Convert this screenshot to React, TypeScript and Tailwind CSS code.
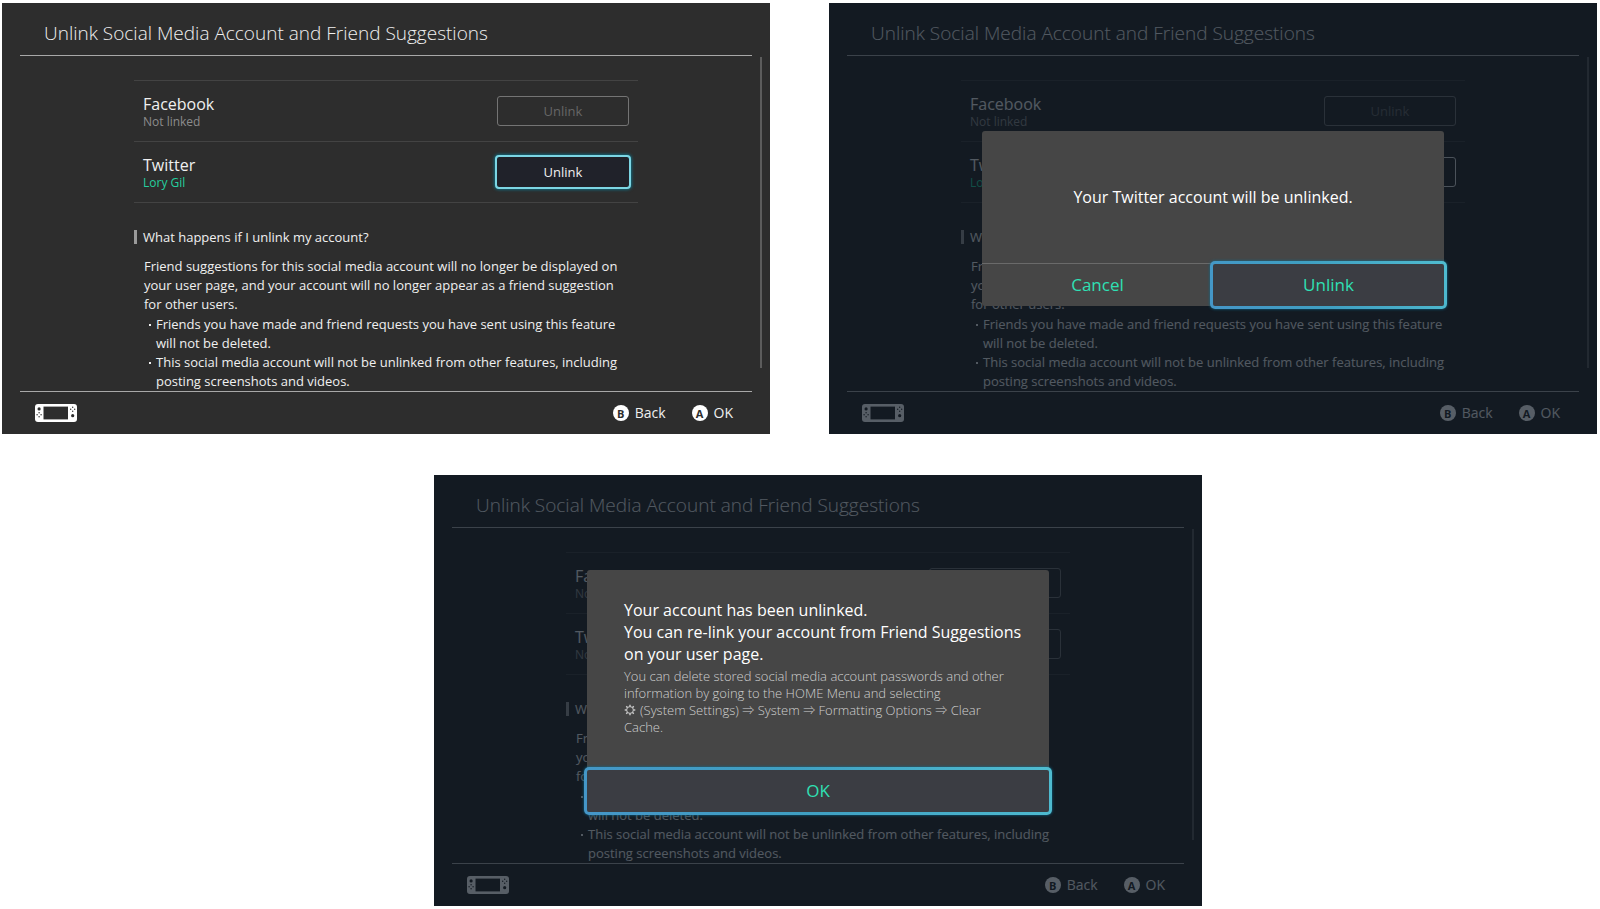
import type { ReactNode } from "react";

type Account = { name: string; status: string; linked: boolean; focused?: boolean };

function ConsoleIcon() {
  return (
    <svg viewBox="0 0 42 18" className="h-[18px] w-[42px]" aria-hidden="true">
      <rect width="42" height="18" rx="3" fill="#fff" />
      <rect x="8.5" y="2.6" width="24.5" height="12.8" fill="#2d2d2d" />
      <circle cx="4.1" cy="4.9" r="1.6" fill="#2d2d2d" />
      <circle cx="37.7" cy="11.7" r="1.6" fill="#2d2d2d" />
      <g fill="#2d2d2d">
        <circle cx="4.1" cy="8.7" r="0.7" />
        <circle cx="4.1" cy="12.7" r="0.7" />
        <circle cx="2.1" cy="10.7" r="0.7" />
        <circle cx="6.1" cy="10.7" r="0.7" />
        <circle cx="37.7" cy="3.3" r="0.7" />
        <circle cx="37.7" cy="7.3" r="0.7" />
        <circle cx="35.7" cy="5.3" r="0.7" />
        <circle cx="39.7" cy="5.3" r="0.7" />
      </g>
    </svg>
  );
}

function GearIcon() {
  const teeth = [0, 45, 90, 135, 180, 225, 270, 315];
  return (
    <svg viewBox="0 0 12 12" className="mr-1 inline-block size-3 align-[-1px]" fill="none" stroke="currentColor" aria-hidden="true">
      <circle cx="6" cy="6" r="3.4" strokeWidth="1" />
      {teeth.map((a) => (
        <path key={a} d="M6 2.4V0.7" strokeWidth="1.4" transform={`rotate(${a} 6 6)`} />
      ))}
    </svg>
  );
}

function Arrow() {
  return <span className="font-['Noto_Sans_CJK_JP',sans-serif] text-[12px] leading-none font-light">⇒</span>;
}

function Hint({ letter, label }: { letter: string; label: string }) {
  return (
    <button type="button" className="flex items-center gap-[6px] text-[14px] leading-5">
      <span className="flex size-4 items-center justify-center rounded-full bg-white text-[11px] leading-none font-bold text-[#2d2d2d]">
        {letter}
      </span>
      {label}
    </button>
  );
}

function AccountRow({ account }: { account: Account }) {
  const { name, status, linked, focused } = account;
  return (
    <li className="flex h-[61px] items-center justify-between border-b border-[#434343] px-[9px]">
      <div className="pt-[3px]">
        <h2 className="text-[16px] leading-[18px]">{name}</h2>
        <p className={linked ? "text-[12px] leading-[17px] text-[#25cf9f]" : "text-[12px] leading-[17px] text-[#8c8c8c]"}>
          {status}
        </p>
      </div>
      {focused ? (
        <button
          type="button"
          aria-label={`Unlink ${name}`}
          className="h-[30px] w-[132px] rounded-[2px] bg-[#20222a] pt-px text-[13px] text-[#f0f0f0] shadow-[0_0_3px_3px_#12687a] outline-2 outline-[#7cd6e4]"
        >
          Unlink
        </button>
      ) : (
        <button
          type="button"
          aria-label={`Unlink ${name}`}
          disabled={!linked}
          className={
            linked
              ? "h-[30px] w-[132px] rounded-[3px] border border-[#d8d8d8] pt-px text-[13px]"
              : "h-[30px] w-[132px] rounded-[3px] border border-[#747474] pt-px text-[13px] text-[#666666]"
          }
        >
          Unlink
        </button>
      )}
    </li>
  );
}

function Screen({ accounts, children }: { accounts: Account[]; children?: ReactNode }) {
  return (
    <section className="relative w-full max-w-[768px] bg-[#2d2d2d] text-[#f0f0f0]">
      <header className="mx-[18px] flex h-[53px] items-center border-b border-[#a8a8a8] px-6 pt-2">
        <h1 className="text-[19px] leading-6 font-light">Unlink Social Media Account and Friend Suggestions</h1>
      </header>

      <div className="relative px-[132px] pt-6">
        <ul className="border-t border-[#434343]">
          {accounts.map((a) => (
            <AccountRow key={a.name} account={a} />
          ))}
        </ul>
        <div className="mt-6 flex items-center gap-[6px]">
          <span className="h-[14px] w-[3px] bg-[#9a9a9a]" />
          <h2 className="text-[13px] leading-5">What happens if I unlink my account?</h2>
        </div>
        <div className="mt-[10px] w-[488px] pl-[10px] text-[13px] leading-[19px]">
          <p>
            Friend suggestions for this social media account will no longer be displayed on your user page, and your
            account will no longer appear as a friend suggestion for other users.
          </p>
          <ul className="pt-px">
            {[
              "Friends you have made and friend requests you have sent using this feature will not be deleted.",
              "This social media account will not be unlinked from other features, including posting screenshots and videos.",
            ].map((t) => (
              <li key={t} className="flex">
                <span className="flex w-3 shrink-0 justify-center pt-[9px]" aria-hidden="true">
                  <span className="size-[2px] bg-current" />
                </span>
                <span>{t}</span>
              </li>
            ))}
          </ul>
        </div>
        <span className="absolute top-[1px] right-2 h-[311px] w-[2px] bg-[#5c5c5c]" />
      </div>

      <div className="mx-[18px] border-t border-[#a8a8a8]" />
      <footer className="flex h-[42px] items-center justify-between pr-[37px] pl-[33px]">
        <ConsoleIcon />
        <div className="flex gap-[26px]">
          <Hint letter="B" label="Back" />
          <Hint letter="A" label="OK" />
        </div>
      </footer>

      {children && (
        <div className="absolute inset-0 flex items-center justify-center bg-[rgba(8,17,30,0.68)]">{children}</div>
      )}
    </section>
  );
}

function FocusedAction({ label }: { label: string }) {
  return (
    <button
      type="button"
      className="-m-[3px] h-[48px] flex-1 rounded-[5px] border-[3px] border-transparent text-[17px] text-[#2fe0b4] shadow-[0_0_3px_#0b6f94] [background:linear-gradient(#3b3d43,#3b3d43)_padding-box,linear-gradient(60deg,#4596c8,#3f9fc2_45%,#4fbcd0)_border-box]"
    >
      {label}
    </button>
  );
}

const linkedTwitter: Account = { name: "Twitter", status: "Lory Gil", linked: true };
const facebook: Account = { name: "Facebook", status: "Not linked", linked: false };

export default function App() {
  return (
    <main className="flex min-h-screen flex-col gap-[41px] bg-white py-[3px] pr-[3px] pl-[2px] font-['Open_Sans','Noto_Sans',sans-serif]">
      <div className="grid grid-cols-2 gap-[59px]">
        <Screen accounts={[facebook, { ...linkedTwitter, focused: true }]} />

        <Screen accounts={[facebook, linkedTwitter]}>
          <div role="dialog" aria-label="Unlink account" className="w-[462px] rounded-[3px] bg-[#464646]">
            <p className="flex h-[132px] items-center justify-center text-[16px] text-white">
              Your Twitter account will be unlinked.
            </p>
            <div className="flex border-t border-[#6a6a6a]">
              <button type="button" className="h-[42px] flex-1 text-[17px] text-[#2fe0b4]">
                Cancel
              </button>
              <FocusedAction label="Unlink" />
            </div>
          </div>
        </Screen>
      </div>

      <div className="flex justify-center pl-[37px]">
        <Screen accounts={[facebook, { name: "Twitter", status: "Not linked", linked: false }]}>
          <div role="dialog" aria-label="Account unlinked" className="w-[462px] rounded-[3px] bg-[#464646]">
            <div className="flex h-[200px] flex-col gap-[3px] pt-[29px] pr-5 pl-[37px]">
              <p className="text-[16px] leading-[22px] text-white">
                Your account has been unlinked.
                <br />
                You can re-link your account from Friend Suggestions
                <br />
                on your user page.
              </p>
              <p className="text-[13px] leading-[17px] font-light text-[#d0d0d0]">
                You can delete stored social media account passwords and other
                <br />
                information by going to the HOME Menu and selecting
                <br />
                <GearIcon />
                (System Settings) <Arrow /> System <Arrow /> Formatting Options <Arrow /> Clear
                <br />
                Cache.
              </p>
            </div>
            <div className="flex">
              <FocusedAction label="OK" />
            </div>
          </div>
        </Screen>
      </div>
    </main>
  );
}
